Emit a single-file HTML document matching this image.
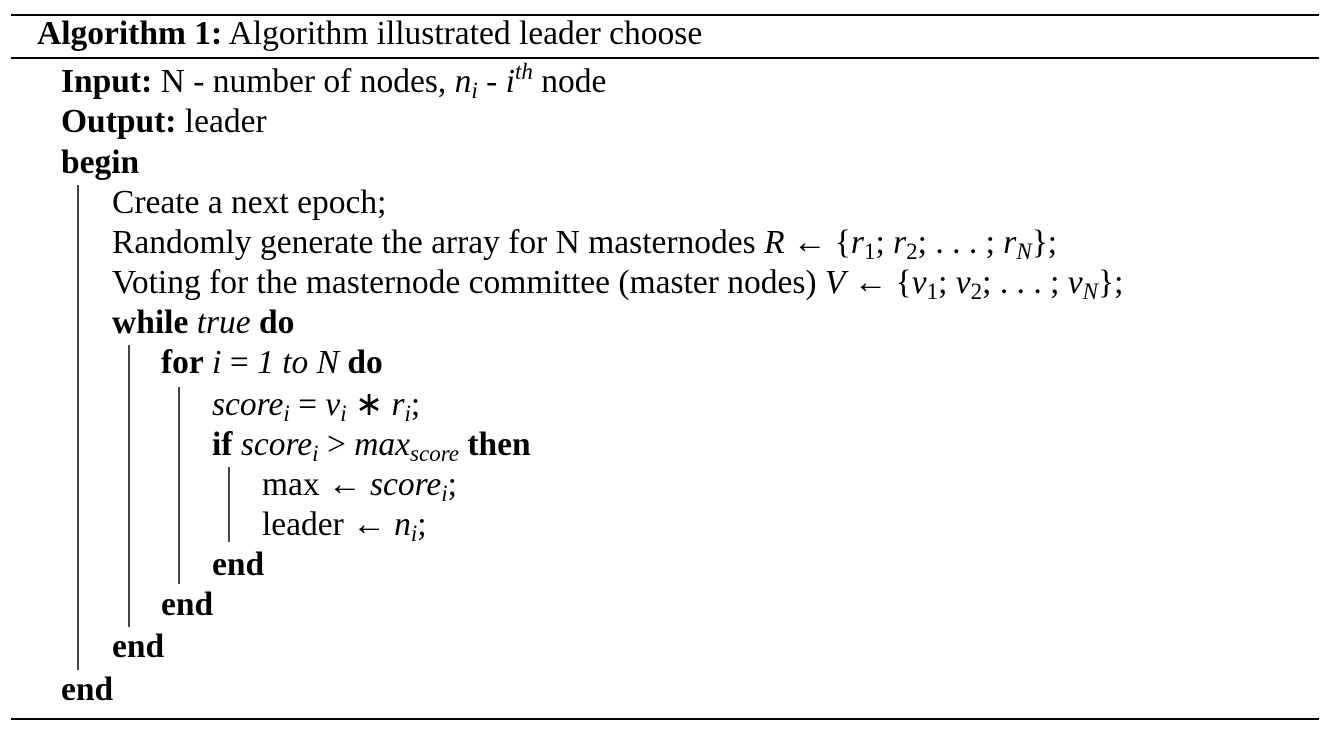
<!DOCTYPE html>
<html><head><meta charset="utf-8"><style>
body{margin:0;width:1330px;height:732px;background:#fff;position:relative;overflow:hidden;font-family:"Liberation Serif",serif;font-size:33.5px;color:#000}
.l{position:absolute;line-height:26px;white-space:nowrap}
b{font-weight:bold}
i{font-style:italic}
sub{font-size:23px;vertical-align:-6px;line-height:0}
sup{font-size:23px;vertical-align:13px;line-height:0}
.r{position:absolute;left:11px;width:1308px;background:#000}
.v{position:absolute;width:1.5px;background:#444}
</style></head><body>
<div class="r" style="top:14px;height:2px"></div>
<div class="r" style="top:57px;height:2px"></div>
<div class="r" style="top:718px;height:2px"></div>
<div class="l" style="left:37px;top:21px"><b>Algorithm 1:</b> Algorithm illustrated leader choose</div>
<div class="l" style="left:61px;top:69px"><b>Input:</b> N - number of nodes, <i>n</i><sub><i>i</i></sub> - <i>i</i><sup><i>th</i></sup> node</div>
<div class="l" style="left:61px;top:109px"><b>Output:</b> leader</div>
<div class="l" style="left:61px;top:150px"><b>begin</b></div>
<div class="v" style="left:77px;top:185px;height:485px"></div>
<div class="l" style="left:112px;top:190px">Create a next epoch;</div>
<div class="l" style="left:112px;top:230px">Randomly generate the array for N masternodes <i>R</i> ← {<i>r</i><sub>1</sub>; <i>r</i><sub>2</sub>; . . . ; <i>r</i><sub><i>N</i></sub>};</div>
<div class="l" style="left:112px;top:270px">Voting for the masternode committee (master nodes) <i>V</i> ← {<i>v</i><sub>1</sub>; <i>v</i><sub>2</sub>; . . . ; <i>v</i><sub><i>N</i></sub>};</div>
<div class="l" style="left:112px;top:310px"><b>while</b> <i>true</i> <b>do</b></div>
<div class="v" style="left:128px;top:345px;height:282px"></div>
<div class="l" style="left:161px;top:350px"><b>for</b> <i>i</i> = <i>1 to N</i> <b>do</b></div>
<div class="v" style="left:178px;top:387px;height:197px"></div>
<div class="l" style="left:212px;top:392px"><i>score</i><sub><i>i</i></sub> = <i>v</i><sub><i>i</i></sub> ∗ <i>r</i><sub><i>i</i></sub>;</div>
<div class="l" style="left:212px;top:432px"><b>if</b> <i>score</i><sub><i>i</i></sub> &gt; <i>max</i><sub><i>score</i></sub> <b>then</b></div>
<div class="v" style="left:228px;top:467px;height:75px"></div>
<div class="l" style="left:262px;top:472px">max ← <i>score</i><sub><i>i</i></sub>;</div>
<div class="l" style="left:262px;top:512px">leader ← <i>n</i><sub><i>i</i></sub>;</div>
<div class="l" style="left:212px;top:552px"><b>end</b></div>
<div class="l" style="left:161px;top:592px"><b>end</b></div>
<div class="l" style="left:112px;top:634px"><b>end</b></div>
<div class="l" style="left:61px;top:677px"><b>end</b></div>
</body></html>
